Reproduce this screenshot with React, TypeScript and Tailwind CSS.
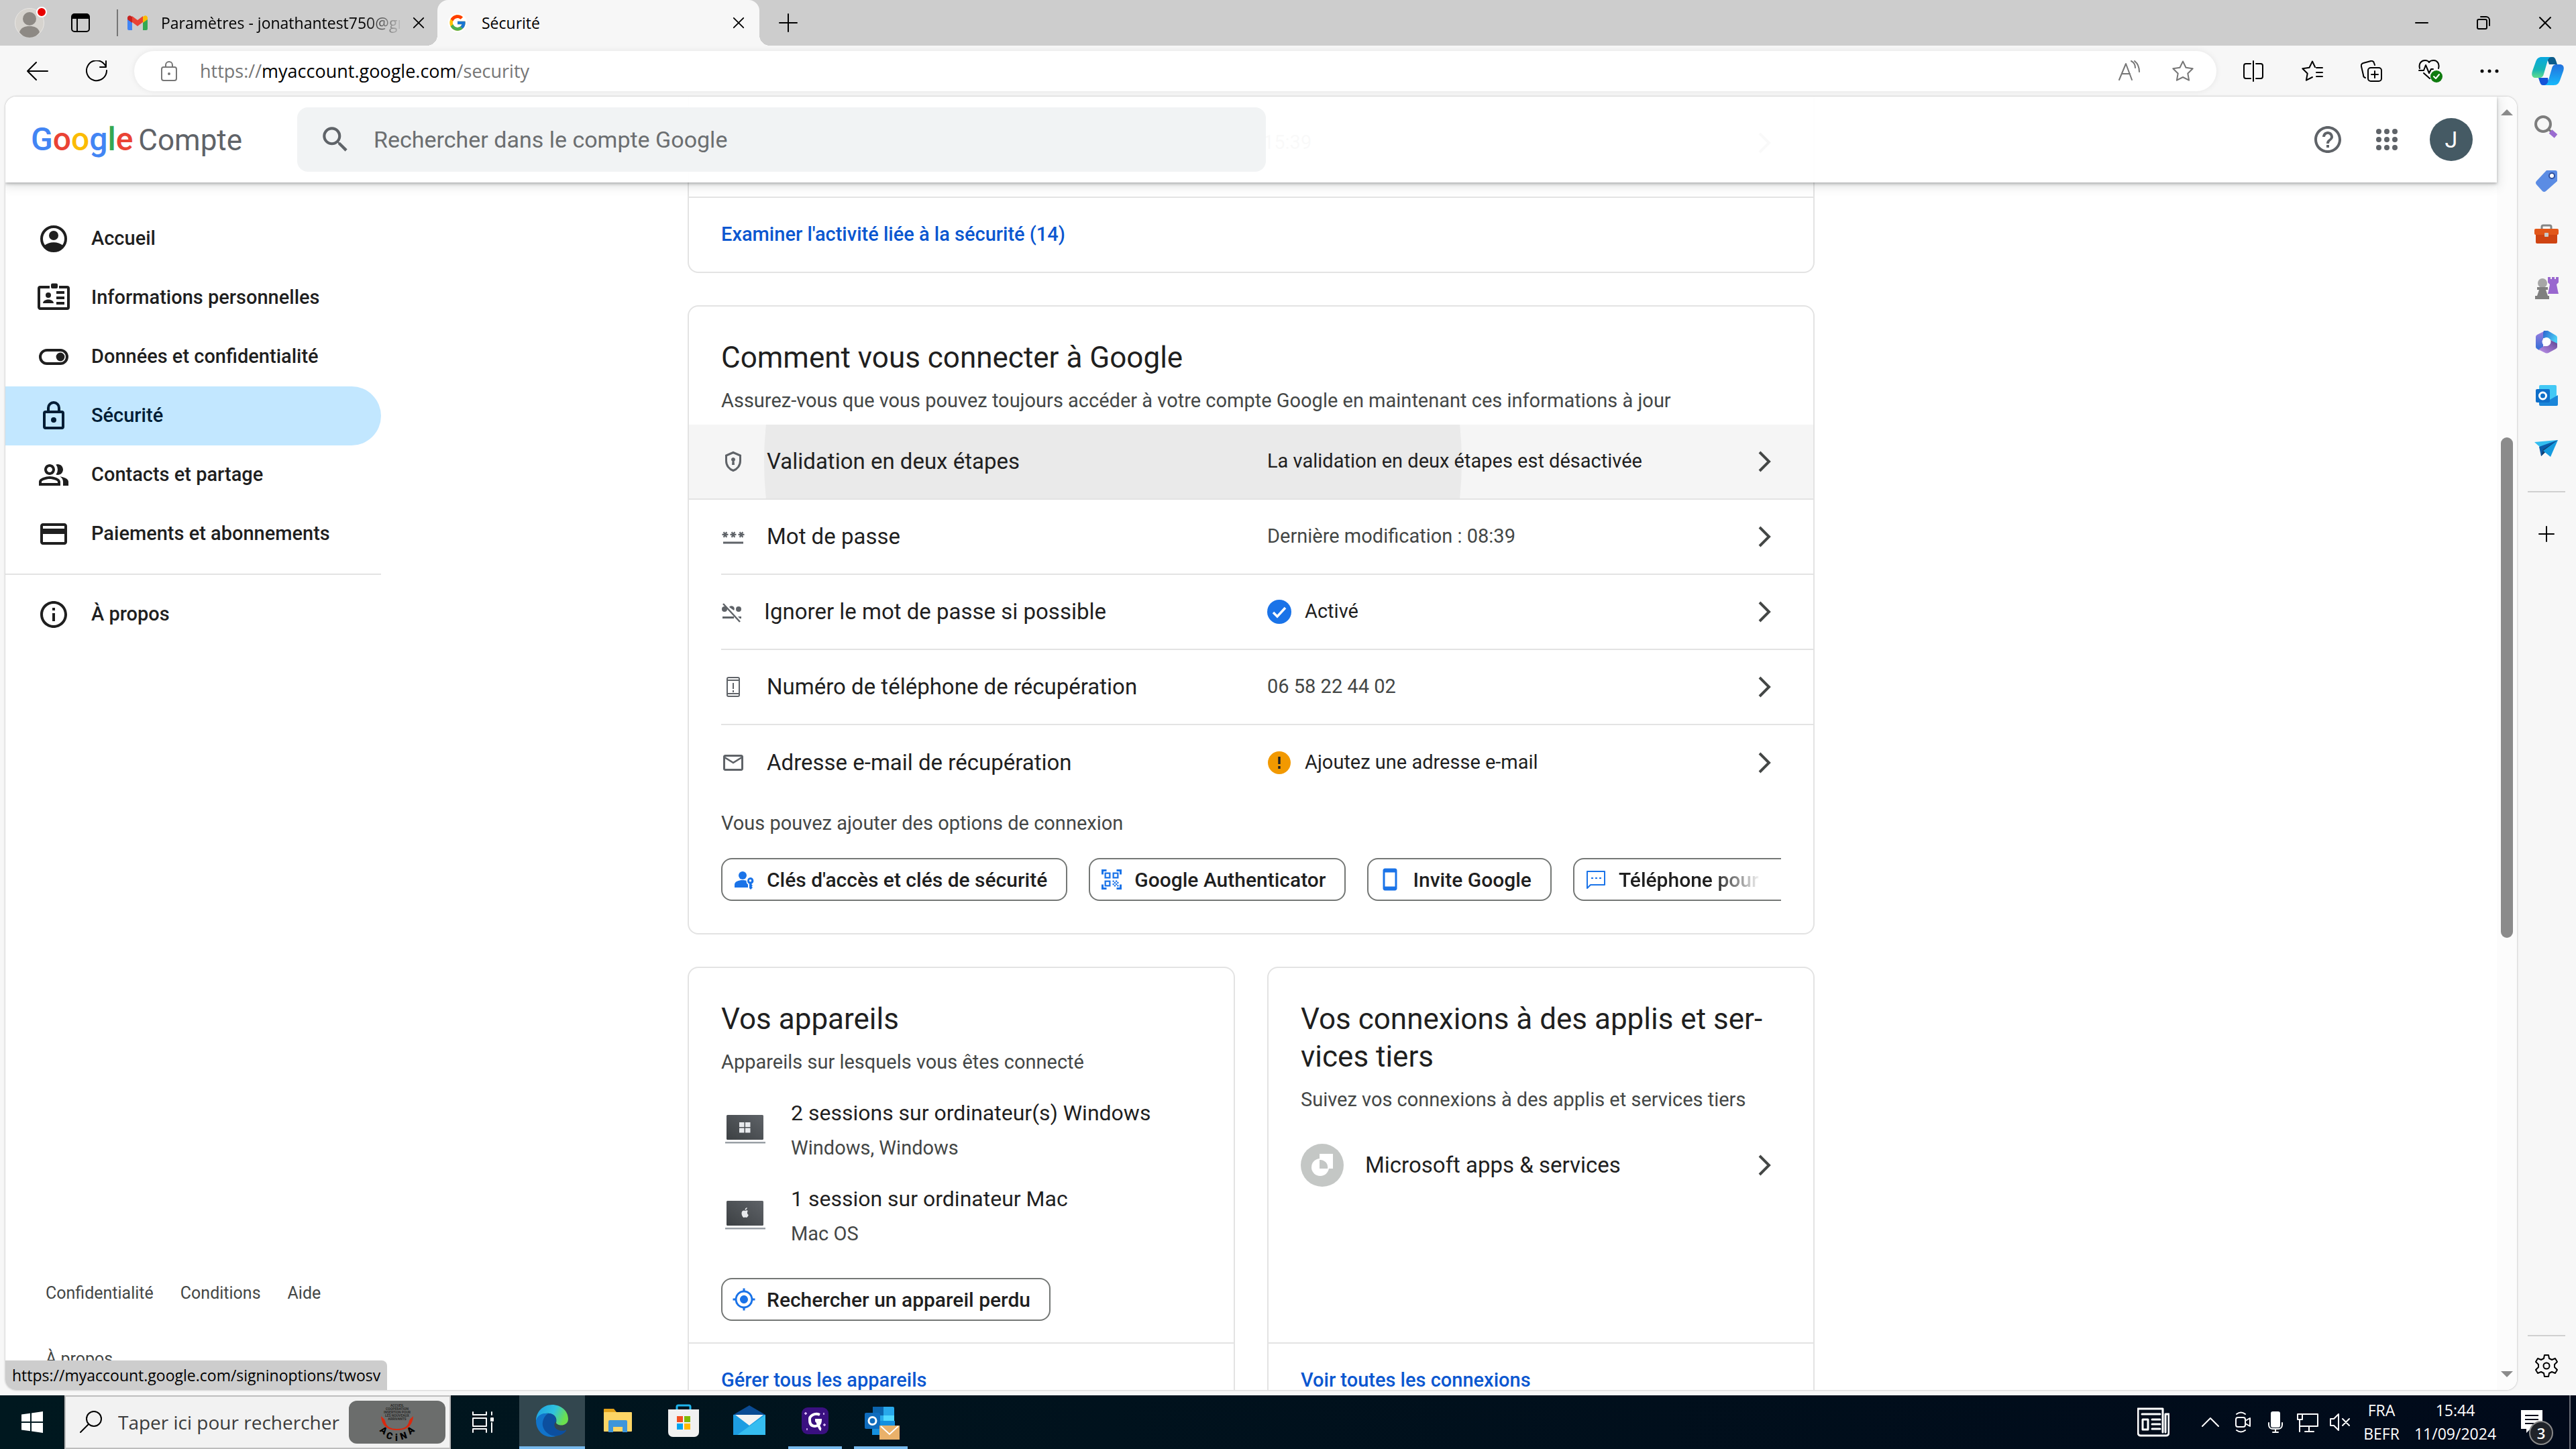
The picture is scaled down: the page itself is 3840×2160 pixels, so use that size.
import type { ReactNode } from "react";
import {
  MdHelpOutline,
  MdMailOutline,
  MdMyLocation,
  MdOutlineCreditCard,
  MdOutlineInfo,
  MdOutlinePeopleAlt,
  MdOutlineQrCodeScanner,
  MdPassword,
  MdSearch,
  MdStayCurrentPortrait,
} from "react-icons/md";
import { FcGoogle } from "react-icons/fc";

type LineIconProps = {
  className?: string;
  box?: number;
  width?: number;
  children: ReactNode;
};

function LineIcon({ className = "size-8", box = 32, width = 2, children }: LineIconProps) {
  return (
    <svg
      className={`shrink-0 ${className}`}
      viewBox={`0 0 ${box} ${box}`}
      fill="none"
      stroke="currentColor"
      strokeWidth={width}
      strokeLinecap="round"
      strokeLinejoin="round"
      aria-hidden="true"
    >
      {children}
    </svg>
  );
}

function IconButton({ label, className, children }: { label: string; className: string; children: ReactNode }) {
  return (
    <button type="button" aria-label={label} className={`flex shrink-0 items-center justify-center ${className}`}>
      {children}
    </button>
  );
}

function Chevron() {
  return (
    <svg className="h-8 w-5 shrink-0 text-[#444746]" viewBox="0 0 20 32" fill="none" stroke="currentColor" strokeWidth="4" aria-hidden="true">
      <path d="M2 2l14 14L2 30" />
    </svg>
  );
}

function CloseIcon({ className = "size-5" }: { className?: string }) {
  return (
    <LineIcon className={className} box={20}>
      <path d="M2 2l16 16M18 2L2 18" />
    </LineIcon>
  );
}

/* ---------- browser window ---------- */

function GmailIcon() {
  return (
    <svg className="h-[22px] w-[30px] shrink-0" viewBox="0 0 30 22" aria-hidden="true">
      <path d="M0 4v16a2 2 0 0 0 2 2h5V9z" fill="#4285f4" />
      <path d="M30 4v16a2 2 0 0 1-2 2h-5V9z" fill="#34a853" />
      <path d="M7 1l8 6 8-6v9l-8 6-8-6z" fill="#ea4335" />
      <path d="M0 3.500C0 .4 3.300-.8 5.500.9L7 2v9L0 6z" fill="#c5221f" />
      <path d="M30 3.500c0-3.100-3.300-4.300-5.500-2.600L23 2v9l7-5z" fill="#fbbc04" />
    </svg>
  );
}

function TabStrip() {
  return (
    <div className="flex h-[68px] shrink-0 items-center bg-[#cdcdcd]">
      <IconButton label="Profil" className="w-[88px]">
        <span className="relative block size-11">
          <svg className="size-11" viewBox="0 0 44 44" aria-hidden="true">
            <circle cx="22" cy="22" r="21.500" fill="#d6d3ce" stroke="#e9e7e4" />
            <circle cx="22" cy="16" r="10" fill="#8d8984" />
            <path d="M7 36c2-7 8-9 15-9s13 2 15 9c-3 5-9 8-15 8s-12-3-15-8z" fill="#8d8984" />
          </svg>
          <span className="absolute -top-0.5 -right-1 size-4 rounded-full border-2 border-white bg-[#e80000]" />
        </span>
      </IconButton>
      <IconButton label="Espaces de travail" className="w-16">
        <svg className="size-7" viewBox="0 0 28 28" aria-hidden="true">
          <rect x="1" y="1" width="26" height="26" rx="4" fill="none" stroke="#000" strokeWidth="2" />
          <path d="M1 8V5a4 4 0 0 1 4-4h18a4 4 0 0 1 4 4v3z" fill="#000" />
          <path d="M9 8v19" stroke="#000" strokeWidth="2" />
        </svg>
      </IconButton>
      <span className="ml-[22px] h-10 w-0.5 bg-[#767676]" />

      <div className="flex h-full w-[476px] items-center pl-3.5">
        <GmailIcon />
        <button type="button" className="ml-5 flex-1 overflow-hidden bg-linear-to-r from-black from-85% to-black/10 bg-clip-text text-left text-[23px] whitespace-nowrap text-transparent">
          Paramètres - jonathantest750@gma
        </button>
        <IconButton label="Fermer l'onglet" className="w-14">
          <CloseIcon className="size-[18px]" />
        </IconButton>
      </div>

      <div className="relative flex h-full w-[480px] items-center rounded-t-2xl bg-[#f7f7f7] pl-4 before:absolute before:bottom-0 before:-left-4 before:size-4 before:bg-[radial-gradient(circle_at_0_0,transparent_16px,#f7f7f7_16px)] after:absolute after:-right-4 after:bottom-0 after:size-4 after:bg-[radial-gradient(circle_at_100%_0,transparent_16px,#f7f7f7_16px)]">
        <FcGoogle className="size-7 shrink-0 rounded-full bg-white" />
        <button type="button" className="ml-[22px] flex-1 text-left text-[23px]">
          Sécurité
        </button>
        <IconButton label="Fermer l'onglet" className="w-[62px]">
          <CloseIcon className="size-[18px]" />
        </IconButton>
      </div>
      <IconButton label="Nouvel onglet" className="w-[86px]">
        <LineIcon className="size-7" box={28}>
          <path d="M14 1v26M1 14h26" />
        </LineIcon>
      </IconButton>

      <div className="ml-auto flex">
        <IconButton label="Réduire" className="w-[92px]">
          <LineIcon className="size-5" box={20}>
            <path d="M1 10h18" />
          </LineIcon>
        </IconButton>
        <IconButton label="Niveau inférieur" className="w-[92px]">
          <LineIcon className="size-5" box={20}>
            <rect x="1" y="5" width="14" height="14" rx="2" />
            <path d="M6 1h8a5 5 0 0 1 5 5v8" />
          </LineIcon>
        </IconButton>
        <IconButton label="Fermer" className="w-[92px]">
          <CloseIcon />
        </IconButton>
      </div>
    </div>
  );
}

function CopilotIcon() {
  return (
    <svg className="h-[42px] w-12" viewBox="0 0 48 42" aria-hidden="true">
      <defs>
        <linearGradient id="cp1" x1="0" y1="0" x2="0" y2="1">
          <stop offset="0" stopColor="#0aa8e0" />
          <stop offset="0.6" stopColor="#16b5b5" />
          <stop offset="1" stopColor="#63dc8c" />
        </linearGradient>
        <linearGradient id="cp2" x1="0" y1="0" x2="0" y2="1">
          <stop offset="0" stopColor="#2370dd" />
          <stop offset="1" stopColor="#17b9fb" />
        </linearGradient>
      </defs>
      <path d="M22 0h9c3 0 4 2 5 5l2 6H26z" fill="#0c5c8c" />
      <path d="M26 42h-9c-3 0-4-2-5-5l-2-6h14z" fill="#1453d8" />
      <path d="M15 0h14c-4 1-5 4-6 8l-5 17c-1 4-3 6-7 6H6c-5 0-7-4-5-10L6 7c2-5 4-7 9-7z" fill="url(#cp1)" />
      <path d="M33 42H19c4-1 5-4 6-8l5-17c1-4 3-6 7-6h5c5 0 7 4 5 10l-5 14c-2 5-4 7-9 7z" fill="url(#cp2)" />
    </svg>
  );
}

function Toolbar() {
  return (
    <div className="flex h-[76px] shrink-0 items-center bg-[#f7f7f7] pl-3">
      <IconButton label="Précédent" className="w-[88px]">
        <LineIcon>
          <path d="M31 16H1M14 3L1 16l13 13" />
        </LineIcon>
      </IconButton>
      <IconButton label="Actualiser" className="w-[88px]">
        <LineIcon>
          <path d="M31 15a15 15 0 1 1-4-10l3 4M30 1v9h-9" />
        </LineIcon>
      </IconButton>

      <div className="ml-3 flex h-15 flex-1 items-center rounded-full bg-white pr-2.5 pl-10 text-[#767676] shadow-[0_0_10px_rgba(0,0,0,0.08)]">
        <svg className="h-8 w-6 shrink-0" viewBox="0 0 24 32" fill="none" stroke="currentColor" strokeWidth="2" aria-hidden="true">
          <rect x="1" y="10" width="22" height="20" rx="3" />
          <path d="M7 10V7a5 5 0 0 1 10 0v3" />
          <circle cx="12" cy="20" r="1" />
        </svg>
        <div
          role="textbox"
          aria-label="Barre d'adresse"
          contentEditable
          suppressContentEditableWarning
          className="ml-[34px] flex-1 text-[27px]"
        >
          https://<span className="text-black">myaccount.google.com</span>/security
        </div>
        <IconButton label="Lecture à voix haute" className="w-20">
          <LineIcon>
            <path d="M1 29L11 5l9 24M5 20h12M19 1c4 2 6 6 6 10M24 1c5 4 7 10 7 16" />
          </LineIcon>
        </IconButton>
        <IconButton label="Ajouter aux favoris" className="w-20">
          <LineIcon>
            <path d="M16 1.500l4.500 9.300 10.200 1.500-7.400 7.200 1.800 10.200L16 25l-9.100 4.700 1.800-10.200-7.400-7.200 10.200-1.500z" />
          </LineIcon>
        </IconButton>
      </div>

      <IconButton label="Écran partagé" className="ml-[11px] w-[88px]">
        <LineIcon>
          <path d="M12 5H5a3 3 0 0 0-3 3v16a3 3 0 0 0 3 3h7M20 5h7a3 3 0 0 1 3 3v16a3 3 0 0 1-3 3h-7M16 1v30" />
        </LineIcon>
      </IconButton>
      <IconButton label="Favoris" className="w-[88px]">
        <LineIcon>
          <path d="M20 10l-4-8.500-4.500 9.300-10.200 1.500 7.400 7.200-1.800 10.200L16 25M22 11h9M22 18h9M22 24h9" />
        </LineIcon>
      </IconButton>
      <IconButton label="Collections" className="w-[88px]">
        <LineIcon>
          <rect x="11" y="11" width="20" height="20" rx="4" />
          <path d="M21 16v10M16 21h10M7 26a4 4 0 0 1-3-4L1 9a4 4 0 0 1 3-5l11-3a4 4 0 0 1 5 3l1 3" />
        </LineIcon>
      </IconButton>
      <IconButton label="Performances" className="w-[88px]">
        <svg className="size-9" viewBox="0 0 36 36" fill="none" stroke="currentColor" strokeWidth="2" strokeLinecap="round" strokeLinejoin="round" aria-hidden="true">
          <path d="M2 14C0 6 5 2 10 2c3 0 5 1 6 3 1-2 4-3 7-3 5 0 9 5 7 12M8 21l9 8M1 17h7l3-8 5 12 3-6h3" />
          <circle cx="27" cy="26" r="9" fill="#0f7b0f" stroke="none" />
          <path d="M23 26l3 3 5-6" stroke="#fff" />
        </svg>
      </IconButton>
      <IconButton label="Paramètres et plus" className="w-[88px]">
        <LineIcon width={5}>
          <path d="M5 16h0M16 16h0M27 16h0" />
        </LineIcon>
      </IconButton>
      <IconButton label="Copilot" className="w-[85px]">
        <CopilotIcon />
      </IconButton>
    </div>
  );
}

const sidebarApps: { label: string; icon: ReactNode }[] = [
  {
    label: "Recherche",
    icon: (
      <>
        <path d="M21 21l5 4" stroke="#777" strokeWidth="3" />
        <path d="M24 24l8 7" stroke="#9a6bd0" strokeWidth="7" />
        <circle cx="13" cy="13" r="11" fill="#f7f7f7" stroke="#7d7d7d" strokeWidth="4" />
      </>
    ),
  },
  {
    label: "Achats",
    icon: (
      <>
        <path d="M18 2h13a3 3 0 0 1 3 3v13L17 33a4 4 0 0 1-5 0L3 23a4 4 0 0 1 0-5z" fill="#5b8ce4" />
        <circle cx="26" cy="10" r="4" fill="#fff" stroke="#2f4f9e" strokeWidth="2" />
      </>
    ),
  },
  {
    label: "Outils",
    icon: (
      <>
        <path d="M11 10V6a2 2 0 0 1 2-2h10a2 2 0 0 1 2 2v4" fill="none" stroke="#858585" strokeWidth="3" />
        <rect x="2" y="16" width="32" height="15" rx="2" fill="#cf4412" />
        <rect y="9" width="36" height="9" rx="2" fill="#e2571a" />
        <rect x="15" y="15" width="6" height="6" rx="1" fill="#c9c9c9" />
      </>
    ),
  },
  {
    label: "Jeux",
    icon: (
      <>
        <circle cx="12" cy="10" r="7" fill="#a6a6a6" />
        <path d="M4 16h16v4h-3l3 9h2v5H1v-5h3l3-9H4z" fill="#7f7f7f" />
        <path d="M20 1h4v3h2V1h4v3h2V1h4v8l-3 3 2 10 1 4H20l1-4 2-10-3-3z" fill="#9967cf" />
      </>
    ),
  },
  {
    label: "Microsoft 365",
    icon: (
      <>
        <defs>
          <linearGradient id="m365a" x1="0" y1="0" x2="0" y2="1">
            <stop offset="0" stopColor="#a07de0" />
            <stop offset="1" stopColor="#2f6fd6" />
          </linearGradient>
          <linearGradient id="m365b" x1="0" y1="0" x2="1" y2="0.500">
            <stop offset="0" stopColor="#2b62d0" />
            <stop offset="1" stopColor="#4bd0f5" />
          </linearGradient>
          <linearGradient id="m365c" x1="0" y1="1" x2="1" y2="0">
            <stop offset="0" stopColor="#c093ee" />
            <stop offset="1" stopColor="#5d4390" />
          </linearGradient>
        </defs>
        <path d="M16 1L4 7a4 4 0 0 0-2 4v13a4 4 0 0 0 2 4l3 2 6-4V7z" fill="url(#m365a)" />
        <path d="M14 1h6l12 7a4 4 0 0 1 2 4v9l-11-7-10-2V4z" fill="url(#m365b)" />
        <path d="M24 15l10 5v4a4 4 0 0 1-2 4l-11 6a6 6 0 0 1-5 0L6 29l8-5h5z" fill="url(#m365c)" />
        <circle cx="18" cy="17.500" r="6.500" fill="#fff" />
      </>
    ),
  },
  {
    label: "Outlook",
    icon: (
      <>
        <rect x="7" y="2" width="26" height="22" rx="2" fill="#43c9f5" />
        <path d="M35 17v14a2 2 0 0 1-2 2H9a2 2 0 0 1-2-2V17l14 8z" fill="#1a86d9" />
        <rect x="2" y="8" width="21" height="20" rx="2" fill="#0f6fc9" />
        <circle cx="12.500" cy="18" r="5" fill="none" stroke="#fff" strokeWidth="3" />
      </>
    ),
  },
  {
    label: "Envoyer",
    icon: (
      <>
        <path d="M0 7l35-3-26 11z" fill="#33bdf0" />
        <path d="M35 4L7 14l3 14z" fill="#0b5ba9" />
        <path d="M10 28l3-10L35 4z" fill="#14406f" />
        <path d="M35 4L24 29 13 20z" fill="#159bdf" />
      </>
    ),
  },
];

function EdgeSidebar() {
  return (
    <aside className="flex w-[88px] shrink-0 flex-col items-center pt-1.5 pb-1">
      {sidebarApps.map(({ label, icon }) => (
        <IconButton key={label} label={label} className="h-20 w-full">
          <svg className="size-9" viewBox="0 0 36 36" aria-hidden="true">
            {icon}
          </svg>
        </IconButton>
      ))}
      <span className="mt-[22px] h-0.5 w-14 bg-[#d0d0d0]" />
      <IconButton label="Personnaliser" className="mt-[22px] h-20 w-full">
        <LineIcon className="size-6" box={24}>
          <path d="M12 1v22M1 12h22" />
        </LineIcon>
      </IconButton>
      <span className="mt-auto h-0.5 w-14 bg-[#d0d0d0]" />
      <IconButton label="Paramètres" className="mt-1 h-20 w-full">
        <LineIcon className="size-9" box={36}>
          <path d="M15 2h6l1 5 4 2 5-2 3 5-4 4v4l4 4-3 5-5-2-4 2-1 5h-6l-1-5-4-2-5 2-3-5 4-4v-4l-4-4 3-5 5 2 4-2z" />
          <circle cx="18" cy="18" r="4.500" />
        </LineIcon>
      </IconButton>
    </aside>
  );
}

function Scrollbar() {
  return (
    <div className="flex w-[30px] shrink-0 flex-col items-center bg-[#fcfcfc] py-[19px]">
      <svg className="h-[9px] w-[18px]" viewBox="0 0 18 9" aria-hidden="true">
        <path d="M0 9l9-9 9 9z" fill="#8b8b8b" />
      </svg>
      <span className="grow-[480]" />
      <span className="w-[18px] grow-[746] rounded-full bg-[#8b8b8b]" />
      <span className="grow-[646]" />
      <svg className="h-[9px] w-[18px]" viewBox="0 0 18 9" aria-hidden="true">
        <path d="M0 0l9 9 9-9z" fill="#8b8b8b" />
      </svg>
    </div>
  );
}

/* ---------- account page ---------- */

function AccountHeader() {
  return (
    <header className="z-10 flex h-32 shrink-0 items-center bg-white/97 pr-9 shadow-[0_2px_4px_rgba(60,64,67,0.35),0_4px_14px_2px_rgba(60,64,67,0.15)]">
      <a href="#accueil" className="flex w-[435px] shrink-0 items-baseline gap-2 pl-[38px]">
        <span className="text-[48px] leading-none font-medium">
          <span className="text-[#4285f4]">G</span>
          <span className="text-[#ea4335]">o</span>
          <span className="text-[#fbbc04]">o</span>
          <span className="text-[#4285f4]">g</span>
          <span className="text-[#34a853]">l</span>
          <span className="text-[#ea4335]">e</span>
        </span>
        <span className="text-[44px] leading-none text-[#5f6368]">Compte</span>
      </a>
      <label className="flex h-24 w-full max-w-[1444px] items-center gap-8 rounded-2xl bg-[#f1f3f4] pl-8">
        <MdSearch className="size-[50px] shrink-0 text-[#5f6368]" />
        <input
          type="text"
          aria-label="Rechercher dans le compte Google"
          placeholder="Rechercher dans le compte Google"
          className="w-full text-[34px] outline-none placeholder:text-[#6b6e70]"
        />
      </label>
      <div className="ml-auto flex items-center text-[#5f6368]">
        <IconButton label="Aide" className="w-[88px]">
          <MdHelpOutline className="size-12" />
        </IconButton>
        <IconButton label="Applications Google" className="w-[88px]">
          <svg className="size-8" viewBox="0 0 32 32" fill="currentColor" aria-hidden="true">
            {[4, 16, 28].map((y) => [4, 16, 28].map((x) => <circle key={`${x}-${y}`} cx={x} cy={y} r="4" />))}
          </svg>
        </IconButton>
        <button type="button" aria-label="Compte" className="ml-5 size-16 rounded-full bg-[#455a64] text-[34px] text-white">
          J
        </button>
      </div>
    </header>
  );
}

const navItems: { label: string; active?: boolean; icon: ReactNode }[] = [
  {
    label: "Accueil",
    icon: (
      <svg className="size-12" viewBox="0 0 24 24" aria-hidden="true">
        <circle cx="12" cy="12" r="9" fill="none" stroke="currentColor" strokeWidth="2" />
        <circle cx="12" cy="9.500" r="3.500" fill="currentColor" />
        <path d="M5 17c2-1.600 4.300-2.400 7-2.400s5 .8 7 2.400c-1.600 2.500-4 4.300-7 4.300S6.600 19.500 5 17z" fill="currentColor" />
      </svg>
    ),
  },
  {
    label: "Informations personnelles",
    icon: (
      <svg className="size-12" viewBox="0 0 24 24" fill="currentColor" aria-hidden="true">
        <path d="M9 3H2a2 2 0 0 0-2 2v14c0 1.100.9 2 2 2h20a2 2 0 0 0 2-2V5a2 2 0 0 0-2-2h-6v2h6v14H2V5h7z" />
        <rect x="10" y="1.200" width="5" height="3.800" rx="1" />
        <circle cx="8" cy="10" r="2" />
        <path d="M4 16c0-2 2.500-2.800 4-2.800s4 .8 4 2.800z" />
        <path d="M14 7h6v2h-6zM14 11h6v2h-6zM14 15h6v2h-6z" />
      </svg>
    ),
  },
  {
    label: "Données et confidentialité",
    icon: (
      <svg className="size-12" viewBox="0 0 24 24" aria-hidden="true">
        <rect x="2" y="7" width="20" height="10" rx="5" fill="none" stroke="currentColor" strokeWidth="2" />
        <circle cx="17" cy="12" r="3.200" fill="currentColor" />
      </svg>
    ),
  },
  {
    label: "Sécurité",
    active: true,
    icon: (
      <svg className="size-12" viewBox="0 0 24 24" fill="none" stroke="currentColor" strokeWidth="2" aria-hidden="true">
        <rect x="5" y="9" width="14" height="12" rx="1" />
        <path d="M8 9V6a4 4 0 0 1 8 0v3" />
        <circle cx="12" cy="15" r="1" />
      </svg>
    ),
  },
  { label: "Contacts et partage", icon: <MdOutlinePeopleAlt className="size-12" /> },
  { label: "Paiements et abonnements", icon: <MdOutlineCreditCard className="size-12" /> },
];

function NavLink({ label, icon, active }: { label: string; icon: ReactNode; active?: boolean }) {
  return (
    <a
      href="#navigation"
      aria-current={active ? "page" : undefined}
      className={`flex h-[88px] items-center gap-8 rounded-r-full pl-12 text-[29px] font-medium ${
        active ? "bg-[#c2e7ff] text-[#001d35]" : "text-[#1f1f1f]"
      }`}
    >
      {icon}
      {label}
    </a>
  );
}

function SideNav() {
  return (
    <div className="flex w-[560px] flex-col pt-[168px]">
      <nav>
        {navItems.map((item) => (
          <NavLink key={item.label} {...item} />
        ))}
        <hr className="my-[15px] border-t-2 border-[#e3e3e3]" />
        <NavLink label="À propos" icon={<MdOutlineInfo className="size-12" />} />
      </nav>
      <footer className="mt-auto pb-7 pl-15 text-[25px] text-[#444746]">
        <div className="flex gap-10">
          <a href="#confidentialite">Confidentialité</a>
          <a href="#conditions">Conditions</a>
          <a href="#aide">Aide</a>
        </div>
        <a href="#apropos" className="mt-15 block">
          À propos
        </a>
      </footer>
    </div>
  );
}

function Card({ className = "", children }: { className?: string; children: ReactNode }) {
  return <section className={`flex flex-col rounded-2xl border-2 border-[#e3e3e3] bg-white ${className}`}>{children}</section>;
}

function CardTitle({ title, subtitle }: { title: string; subtitle: string }) {
  return (
    <div className="px-12 pt-12">
      <h2 lang="fr" className="text-[44px] leading-14 text-[#1f1f1f]">
        {title}
      </h2>
      <p className="mt-4 text-[29px] leading-10 text-[#444746]">{subtitle}</p>
    </div>
  );
}

function CardLink({ children }: { children: ReactNode }) {
  return (
    <a href="#details" className="flex h-28 items-center border-t-2 border-[#e3e3e3] px-12 text-[29px] font-medium text-[#0b57d0]">
      {children}
    </a>
  );
}

const CheckBadge = () => (
  <svg className="mr-5 size-9" viewBox="0 0 36 36" aria-hidden="true">
    <circle cx="18" cy="18" r="18" fill="#1a73e8" />
    <path d="M9 19l6 6 12-13" fill="none" stroke="#fff" strokeWidth="3.500" />
  </svg>
);

const WarningBadge = () => (
  <svg className="mr-5 size-9" viewBox="0 0 36 36" aria-hidden="true">
    <circle cx="18" cy="18" r="17" fill="#f29900" />
    <path d="M16.300 9h3.400v11h-3.400zM16.300 23h3.400v4h-3.400z" fill="#202124" />
  </svg>
);

const signInRows: { label: string; value: string; strong?: boolean; badge?: ReactNode; icon: ReactNode }[] = [
  {
    label: "Validation en deux étapes",
    value: "La validation en deux étapes est désactivée",
    strong: true,
    icon: (
      <svg className="size-9" viewBox="0 0 36 36" fill="none" stroke="currentColor" strokeWidth="3" aria-hidden="true">
        <path d="M18 4.500L7.500 9v8c0 7 4.500 12.500 10.500 14.500C24 29.500 28.500 24 28.500 17V9z" />
        <path d="M15 15a3 3 0 1 1 4.500 2.600L20 23h-4l.5-5.400A3 3 0 0 1 15 15z" fill="currentColor" stroke="none" />
      </svg>
    ),
  },
  {
    label: "Mot de passe",
    value: "Dernière modification : 08:39",
    icon: <MdPassword className="size-9" />,
  },
  {
    label: "Ignorer le mot de passe si possible",
    value: "Activé",
    strong: true,
    badge: <CheckBadge />,
    icon: (
      <svg className="h-9 w-8" viewBox="0 0 32 36" fill="currentColor" aria-hidden="true">
        <circle cx="5" cy="14" r="4" />
        <circle cx="26" cy="14" r="4" />
        <path d="M12 11a4 4 0 0 1 7 5zM2 25h17v3H2zM25 25h5v3h-2z" />
        <path d="M3 6l25 27" stroke="currentColor" strokeWidth="2.500" />
      </svg>
    ),
  },
  {
    label: "Numéro de téléphone de récupération",
    value: "06 58 22 44 02",
    icon: (
      <svg className="size-9" viewBox="0 0 36 36" fill="none" stroke="currentColor" strokeWidth="2" aria-hidden="true">
        <rect x="9" y="4" width="18" height="28" rx="2" />
        <path d="M9 8h18M9 28h18M18 12v9M18 23v3" />
      </svg>
    ),
  },
  {
    label: "Adresse e-mail de récupération",
    value: "Ajoutez une adresse e-mail",
    strong: true,
    badge: <WarningBadge />,
    icon: <MdMailOutline className="size-9" />,
  },
];

const signInOptions: { label: string; icon: ReactNode }[] = [
  {
    label: "Clés d'accès et clés de sécurité",
    icon: (
      <svg className="size-9" viewBox="0 0 36 36" fill="currentColor" aria-hidden="true">
        <circle cx="16" cy="12" r="6" />
        <path d="M4 30v-4c0-5 6-7 12-7 2 0 4 .2 5.500.8 0 3 .8 4.700 2.500 5.700V30z" />
        <path fillRule="evenodd" d="M27.500 15a5 5 0 0 1 2 9.500v1l1.500 1.500-1.500 1.500 1.500 1.500-3 3-2-2v-6.500a5 5 0 0 1 1.500-9.500zm0 3a1.700 1.700 0 1 0 0 3.400 1.700 1.700 0 0 0 0-3.400z" />
      </svg>
    ),
  },
  { label: "Google Authenticator", icon: <MdOutlineQrCodeScanner className="size-9" /> },
  { label: "Invite Google", icon: <MdStayCurrentPortrait className="size-9" /> },
  {
    label: "Téléphone pour la validation",
    icon: (
      <svg className="size-9" viewBox="0 0 36 36" fill="none" stroke="currentColor" strokeWidth="2" strokeLinejoin="round" aria-hidden="true">
        <path d="M5 6h26v20H10l-5 5z" />
        <path d="M11 16h3M17 16h3M23 16h3" />
      </svg>
    ),
  },
];

function Chip({ label, icon, fade }: { label: string; icon: ReactNode; fade?: boolean }) {
  return (
    <button
      type="button"
      className="flex h-16 shrink-0 items-center gap-4 rounded-2xl border-2 border-[#747775] pr-7 pl-3.5 text-[30px] font-medium whitespace-nowrap text-[#1f1f1f]"
    >
      <span className="text-[#1a73e8]">{icon}</span>
      {fade ? (
        <span className="w-[260px] overflow-hidden text-left mask-r-from-55% mask-r-to-82%">{label}</span>
      ) : (
        label
      )}
    </button>
  );
}

function SignInCard() {
  return (
    <Card>
      <CardTitle
        title="Comment vous connecter à Google"
        subtitle="Assurez-vous que vous pouvez toujours accéder à votre compte Google en maintenant ces informations à jour"
      />
      <ul className="mt-4">
        {signInRows.map(({ label, value, strong, badge, icon }, i) => (
          <li
            key={label}
            className={
              i === 0 ? "relative overflow-hidden border-b-2 border-[#e3e3e3] bg-[#f5f5f5]" : "pl-12"
            }
          >
            {i === 0 && (
              <span className="absolute top-1/2 left-28 size-[1040px] -translate-y-1/2 rounded-full bg-[#eaeaea]" />
            )}
            <a
              href="#option"
              className={`relative flex items-center pr-[62px] ${i === 0 ? "h-[110px] pl-12" : "h-28"} ${
                i > 0 && i < signInRows.length - 1 ? "border-b-2 border-[#e3e3e3]" : ""
              }`}
            >
              <span className="flex w-[814px] items-center gap-8 text-[33px] text-[#1f1f1f]">
                <span className="text-[#5f6368]">{icon}</span>
                {label}
              </span>
              <span className={`flex flex-1 items-center text-[29px] ${strong ? "text-[#1f1f1f]" : "text-[#444746]"}`}>
                {badge}
                {value}
              </span>
              <Chevron />
            </a>
          </li>
        ))}
      </ul>
      <p className="mt-3.5 px-12 text-[29px] leading-10 text-[#444746]">Vous pouvez ajouter des options de connexion</p>
      <div className="mx-12 mt-8 mb-12 flex gap-8 overflow-hidden">
        {signInOptions.map(({ label, icon }, i) => (
          <Chip key={label} label={label} icon={icon} fade={i === signInOptions.length - 1} />
        ))}
      </div>
    </Card>
  );
}

function LaptopIcon({ logo }: { logo: ReactNode }) {
  return (
    <svg className="h-15 w-[72px] shrink-0" viewBox="0 0 72 60" aria-hidden="true">
      <defs>
        <linearGradient id="lid" x1="0" y1="1" x2="1" y2="0">
          <stop offset="0" stopColor="#3c4043" />
          <stop offset="1" stopColor="#5f6368" />
        </linearGradient>
      </defs>
      <rect x="8" y="9" width="55" height="37" rx="1.500" fill="url(#lid)" />
      <rect x="6" y="49" width="60" height="2.500" fill="#9aa0a6" />
      <g fill="#e8eaed">{logo}</g>
    </svg>
  );
}

const windowsLogo = <path d="M27 20h7.500v7H27zM36 20h7.500v7H36zM27 28.500h7.500v7H27zM36 28.500h7.500v7H36z" />;
const appleLogo = (
  <path d="M40 24c-1.300-1-3-.8-4 0-1.200-.8-3-.9-4.200.2-2.200 2-1.300 6.800 1 9.300 1 1 1.800.6 3 .1 1.200.5 2.200.8 3.200-.3.900-1 1.500-2.200 1.800-3.300-2.400-1.200-2.300-4.600-.8-6zM35.500 22.800c0-2 1.300-3.500 3.200-3.800.1 2-1.300 3.700-3.200 3.800z" />
);

const devices = [
  { name: "2 sessions sur ordinateur(s) Windows", detail: "Windows, Windows", logo: windowsLogo },
  { name: "1 session sur ordinateur Mac", detail: "Mac OS", logo: appleLogo },
];

function DevicesCard() {
  return (
    <Card>
      <CardTitle title="Vos appareils" subtitle="Appareils sur lesquels vous êtes connecté" />
      <ul className="mt-4">
        {devices.map(({ name, detail, logo }) => (
          <li key={name}>
            <a href="#appareil" className="flex items-center gap-8 px-12 py-4">
              <LaptopIcon logo={logo} />
              <span>
                <span className="block text-[32px] leading-12 text-[#1f1f1f]">{name}</span>
                <span className="mt-2 block text-[29px] leading-10 text-[#444746]">{detail}</span>
              </span>
            </a>
          </li>
        ))}
      </ul>
      <div className="mt-[30px] mb-8 flex px-12">
        <Chip label="Rechercher un appareil perdu" icon={<MdMyLocation className="size-9" />} />
      </div>
      <div className="mt-auto">
        <CardLink>Gérer tous les appareils</CardLink>
      </div>
    </Card>
  );
}

function ConnectionsCard() {
  return (
    <Card>
      <CardTitle
        title={"Vos connexions à des applis et ser\u00advices tiers"}
        subtitle="Suivez vos connexions à des applis et services tiers"
      />
      <a href="#microsoft" className="mt-4 flex items-center gap-8 py-[30px] pr-[62px] pl-12 text-[33px] text-[#1f1f1f]">
        <svg className="size-16 shrink-0" viewBox="0 0 64 64" aria-hidden="true">
          <circle cx="32" cy="32" r="32" fill="#c4c7c5" />
          <circle cx="29" cy="35" r="13" fill="#fff" />
          <path d="M28 15h20v22H28z" fill="#fff" />
          <path d="M28 24a11 11 0 0 1 12 13H28z" fill="#c4c7c5" />
        </svg>
        <span className="flex-1">Microsoft apps &amp; services</span>
        <Chevron />
      </a>
      <div className="mt-auto">
        <CardLink>Voir toutes les connexions</CardLink>
      </div>
    </Card>
  );
}

function AccountPage() {
  return (
    <div className="flex min-w-0 flex-1 flex-col">
      <AccountHeader />
      <div className="-mt-32 grid min-h-0 flex-1 grid-cols-[1fr_minmax(0,1680px)_1fr] overflow-hidden">
        <SideNav />
        <main className="flex min-h-0 flex-col gap-12">
          <Card className="rounded-t-none border-t-0">
            <div className="flex h-[149px] items-center justify-end pr-[62px] pb-3 text-[29px] text-[#444746]">
              <span className="w-[738px]">15:39</span>
              <Chevron />
            </div>
            <CardLink>Examiner l'activité liée à la sécurité (14)</CardLink>
          </Card>
          <SignInCard />
          <div className="grid grid-cols-2 gap-12">
            <DevicesCard />
            <ConnectionsCard />
          </div>
        </main>
      </div>
    </div>
  );
}

/* ---------- taskbar ---------- */

const taskbarApps: { label: string; open?: boolean; active?: boolean; icon: ReactNode }[] = [
  {
    label: "Microsoft Edge",
    open: true,
    active: true,
    icon: (
      <>
        <defs>
          <linearGradient id="edge" x1="0" y1="0" x2="1" y2="0.300">
            <stop offset="0" stopColor="#1b9de2" />
            <stop offset="0.600" stopColor="#2fc2df" />
            <stop offset="1" stopColor="#6be04e" />
          </linearGradient>
        </defs>
        <path d="M24 0C10 0 0 11 0 24c5-10 14-12 20-11 8 1 12 7 10 14 2 5 18 6 18-6C48 9 37 0 24 0z" fill="url(#edge)" />
        <path d="M0 24C2 14 12 12 19 13c-7 3-10 13-6 22 3 7 12 13 20 11-19 7-33-6-33-22z" fill="#1173c9" />
        <path d="M19 13c7 0 12 5 11 12-4 3-4 10 4 13 6 2 10 0 11-1 1 2-5 8-12 9-13 3-25-9-23-20 1-6 4-11 9-13z" fill="#0c4f9f" />
      </>
    ),
  },
  {
    label: "Explorateur de fichiers",
    icon: (
      <>
        <path d="M3 7a1 1 0 0 1 1-1h14l4 5v9H3z" fill="#e2a21a" />
        <rect x="3" y="11" width="42" height="29" rx="1" fill="#fdd565" />
        <path d="M10 41V25a2 2 0 0 1 2-2h24a2 2 0 0 1 2 2v16h-7v-8H17v8z" fill="#3e95da" />
      </>
    ),
  },
  {
    label: "Microsoft Store",
    icon: (
      <>
        <path d="M14 10V3a2 2 0 0 1 2-2h16a2 2 0 0 1 2 2v7" fill="none" stroke="#1fb4ec" strokeWidth="3" />
        <path d="M1 7h46v34a7 7 0 0 1-7 7H8a7 7 0 0 1-7-7z" fill="#f1f1f1" />
        <path d="M14 17h9v9h-9z" fill="#f25022" />
        <path d="M25 17h9v9h-9z" fill="#7fba00" />
        <path d="M14 28h9v9h-9z" fill="#00a4ef" />
        <path d="M25 28h9v9h-9z" fill="#ffb900" />
      </>
    ),
  },
  {
    label: "Courrier",
    icon: (
      <>
        <path d="M0 15L24 1l24 14z" fill="#0a4b93" />
        <path d="M0 15h48v30H0z" fill="#1d9de2" />
        <path d="M48 15v30H6z" fill="#35bdf0" />
        <path d="M3 15h42L24 31z" fill="#f3f3f3" />
      </>
    ),
  },
  {
    label: "Grammalecte",
    open: true,
    icon: (
      <>
        <rect x="4" y="4" width="40" height="40" rx="9" fill="#3a1080" />
        <path d="M31 15a10 8 0 0 0-15 8c0 7 4 9 8 9s8-3 8-9h-8c5 0 5 13 9 14" fill="none" stroke="#fff" strokeWidth="4" />
        <path d="M10 11v4M8 13h4M38 28v4M36 30h4M12 35v3M37 12v3" stroke="#e7c9ff" strokeWidth="1.500" />
      </>
    ),
  },
  {
    label: "Outlook",
    open: true,
    icon: (
      <>
        <rect x="12" y="3" width="32" height="26" rx="2" fill="#28a8ea" />
        <path d="M12 3h16v13H12z" fill="#0b64ad" />
        <path d="M28 16h16v13H28z" fill="#50d9ff" />
        <path d="M11 24h34v18a3 3 0 0 1-3 3H11z" fill="#1490df" />
        <rect y="12" width="23" height="24" rx="2" fill="#0f6cbd" />
        <circle cx="11.500" cy="24" r="5.500" fill="none" stroke="#fff" strokeWidth="3" />
        <path d="M22 31h30v21H22z" fill="#e9b16a" />
        <path d="M24 32l13 12 13-12" fill="none" stroke="#fff" strokeWidth="2" />
      </>
    ),
  },
];

function AcinaLogo() {
  return (
    <svg className="h-15 w-[60px]" viewBox="0 0 60 60" aria-hidden="true">
      <path d="M6 21c3 3 5 4 6 7 2 9 8 12 18 12s16-3 18-12c1-3 3-4 6-7-1 15-10 21-24 21S7 36 6 21z" fill="#d8290f" />
      <g fontSize="5" fontFamily="Roboto, sans-serif" fontWeight="700" textAnchor="middle" fill="#2a2a2a">
        <text x="30" y="7">ACCUEIL</text>
        <text x="30" y="12">COOPERATION</text>
        <text x="30" y="17">INSERTION POUR</text>
        <text x="30" y="22">LES NOUVEAUX</text>
        <text x="30" y="27">ARRIVANTS</text>
      </g>
      <g fontSize="14" fontFamily="Roboto, sans-serif" fontWeight="900" textAnchor="middle" fill="#000">
        <text transform="translate(7 46) rotate(38)">A</text>
        <text transform="translate(17 55) rotate(18)">C</text>
        <text transform="translate(29 58)">i</text>
        <text transform="translate(41 55) rotate(-18)">N</text>
        <text transform="translate(53 46) rotate(-38)">A</text>
      </g>
    </svg>
  );
}

function Taskbar() {
  return (
    <footer className="flex h-20 shrink-0 items-stretch bg-linear-to-r from-[#00181f] to-[#010a1a] text-white">
      <IconButton label="Démarrer" className="w-24">
        <svg className="size-8" viewBox="0 0 32 32" fill="#fff" aria-hidden="true">
          <path d="M0 4.500L13 2.700V15H0zM15 2.400L32 0v15H15zM0 17h13v12.300L0 27.500zM15 17h17v15l-17-2.400z" />
        </svg>
      </IconButton>
      <label className="flex w-[576px] items-center border-2 border-[#bdbdbd] bg-[#f2f2f2] pr-1.5 pl-5 text-black">
        <LineIcon className="size-9" box={36}>
          <circle cx="22" cy="13" r="11" />
          <path d="M14 21L2 33" />
        </LineIcon>
        <input
          type="text"
          aria-label="Taper ici pour rechercher"
          placeholder="Taper ici pour rechercher"
          className="ml-[22px] min-w-0 flex-1 text-[28px] outline-none placeholder:text-[#3b3b3b]"
        />
        <span className="flex h-16 w-36 shrink-0 items-center justify-center rounded-xl bg-[#6b6d6c]">
          <AcinaLogo />
        </span>
      </label>
      <IconButton label="Affichage des tâches" className="mr-1.5 w-24">
        <LineIcon>
          <path d="M1 1v4h20V1M1 31v-5h20v5M1 10h20v12H1zM29 1v4M29 17v14" />
          <rect x="28" y="10" width="3" height="4" fill="currentColor" />
        </LineIcon>
      </IconButton>
      {taskbarApps.map(({ label, open, active, icon }) => (
        <button
          key={label}
          type="button"
          aria-label={label}
          className={`flex w-[98px] flex-col items-center ${active ? "bg-[#33474f]" : ""}`}
        >
          <span className="flex flex-1 items-center">
            <svg className="size-12 overflow-visible" viewBox="0 0 48 48" aria-hidden="true">
              {icon}
            </svg>
          </span>
          <span className={`h-1 ${active ? "w-full" : "w-20"} ${open ? "bg-[#76b9ed]" : ""}`} />
        </button>
      ))}

      <div className="ml-auto flex items-center">
        <IconButton label="Actualités" className="w-24">
          <LineIcon className="size-12" box={48} width={3}>
            <path d="M38 2H1v36a4 4 0 0 0 4 4h38a4 4 0 0 0 4-4V10h-5v27M38 2v35M7 10h27M22 18h12M22 25h12M22 32h12M8 18h8v15H8z" transform="translate(0 2)" />
          </LineIcon>
        </IconButton>
        <IconButton label="Icônes cachées" className="ml-3 w-[50px]">
          <LineIcon className="size-7" box={28}>
            <path d="M2 20L14 8l12 12" />
          </LineIcon>
        </IconButton>
        <IconButton label="Caméra" className="w-12">
          <LineIcon className="size-8">
            <rect x="5" y="9" width="14" height="14" rx="3" />
            <path d="M19 14l7-4v12l-7-4M6 4c4-3 9-3 13 0M6 28c4 3 9 3 13 0" />
          </LineIcon>
        </IconButton>
        <IconButton label="Microphone" className="w-12">
          <LineIcon className="size-8">
            <rect x="10" y="1" width="12" height="22" rx="2" fill="currentColor" />
            <path d="M6 17v3c0 4 3 6 6 6h8c3 0 6-2 6-6v-3M16 26v5M12 31h8" />
          </LineIcon>
        </IconButton>
        <IconButton label="Réseau" className="w-12">
          <LineIcon className="size-8">
            <path d="M9 4h22v18H4V14M18 22v8M12 30h13M1 4h7v8H1zM4 12v18" />
          </LineIcon>
        </IconButton>
        <IconButton label="Volume" className="w-12">
          <LineIcon className="size-8">
            <path d="M2 11h5l7-7v24l-7-7H2zM20 11l10 10M30 11L20 21" />
          </LineIcon>
        </IconButton>
        <div className="w-[76px] text-center text-[23px] leading-[35px]">
          FRA
          <br />
          BEFR
        </div>
        <div className="w-[144px] text-center text-[23px] leading-[35px]">
          15:44
          <br />
          11/09/2024
        </div>
        <button type="button" aria-label="Notifications" className="relative flex w-[98px] justify-center pr-3.5">
          <svg className="size-11" viewBox="0 0 44 44" aria-hidden="true">
            <path d="M6 4h32v28H20l-6 6v-6H6z" fill="#fff" />
            <path d="M12 12h20M12 18h20M12 24h20" stroke="#010a1a" strokeWidth="2" />
          </svg>
          <span className="absolute top-5 left-[38px] flex size-9 items-center justify-center rounded-full border-2 border-[#8a8a8a] bg-[#202329] text-[22px] leading-none font-semibold">
            3
          </span>
        </button>
        <span className="mr-2 h-20 w-0.5 bg-[#6b6f78]" />
      </div>
    </footer>
  );
}

export default function App() {
  return (
    <div className="flex h-screen flex-col overflow-hidden bg-[#f7f7f7] font-['Open_Sans',sans-serif] text-black">
      <TabStrip />
      <Toolbar />
      <div className="flex min-h-0 flex-1">
        <div className="relative mb-2 ml-2 flex min-w-0 flex-1 overflow-hidden rounded-2xl bg-white font-['Roboto',sans-serif] shadow-[0_0_3px_rgba(0,0,0,0.3)]">
          <AccountPage />
          <Scrollbar />
          <div className="absolute bottom-0 left-0 z-20 flex h-11 items-center rounded-tr-lg bg-[#cdcdcd] px-2.5 font-['Open_Sans',sans-serif] text-[23px] text-black">
            https://myaccount.google.com/signinoptions/twosv
          </div>
        </div>
        <EdgeSidebar />
      </div>
      <Taskbar />
    </div>
  );
}
